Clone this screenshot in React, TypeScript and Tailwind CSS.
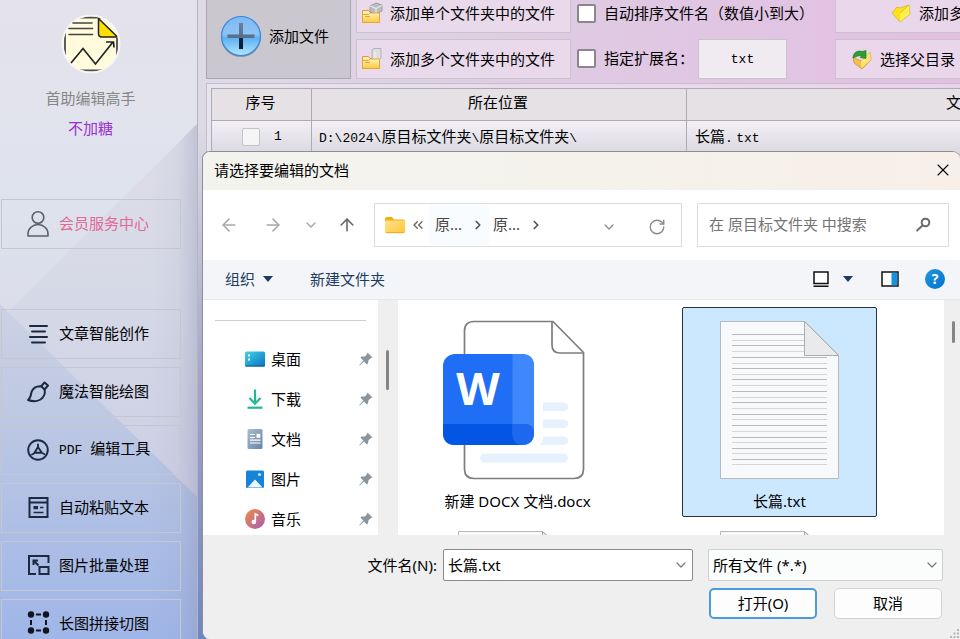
import React from 'react';
import { ArrowLeft, ArrowRight, ArrowUp, ChevronDown, ChevronRight, ChevronsLeft, RotateCw, X } from 'lucide-react';
import clsx from 'clsx';

type IconProps = { className?: string };

/* ---------- sidebar icons ---------- */

const LogoMark = () => (
  <svg viewBox="0 0 60 60" className="size-[60px]" aria-hidden="true">
    <defs>
      <clipPath id="logo-clip">
        <circle cx="30" cy="30" r="27.500" />
      </clipPath>
    </defs>
    <circle cx="30" cy="30" r="29.500" fill="#f6f5f8" />
    <g clipPath="url(#logo-clip)">
      <rect width="60" height="60" fill="#fffbdc" />
      <path d="M4 0v60M56 24v36M0 3.500h40M0 56.500h60" stroke="#4c4c4c" strokeWidth="1.800" fill="none" />
      <path d="M39 0h21v22z" fill="#f3f2f6" />
      <path d="M37.500 4.500l19 18.500H41q-3.500 0-3.500-3.500z" fill="#ffe000" stroke="#222" strokeWidth="1.500" strokeLinejoin="round" />
    </g>
    <path d="M12 9h19M8 14.500h23.500M8 20.500h23.500" stroke="#444" strokeWidth="1.600" strokeLinecap="round" />
    <path d="M10 49l12-14.500L34.500 50 52 28M45 28h7.500l.5 5.500" fill="none" stroke="#222" strokeWidth="1.700" />
  </svg>
);

const UserIcon = ({ className }: IconProps) => (
  <svg viewBox="0 0 24 28" className={className} fill="none" stroke="#5b5f6b" strokeWidth="1.600">
    <circle cx="12" cy="8.500" r="5.800" />
    <path d="M2 27v-2a10 9.500 0 0 1 20 0v2z" strokeLinejoin="round" />
  </svg>
);

const LinesIcon = ({ className }: IconProps) => (
  <svg viewBox="0 0 24 24" className={className} stroke="#1b2a40" strokeWidth="2" strokeLinecap="round">
    <path d="M4 5h17M6 10.500h13M4 16h17M6 21.500h13" />
  </svg>
);

const BrushIcon = ({ className }: IconProps) => (
  <svg viewBox="0 0 24 24" className={className} fill="none" stroke="#1b2a40" strokeWidth="2" strokeLinejoin="round">
    <path d="M2 21c2.500-2 3-4.500 3.500-8C7 9 10 7.200 14 7.200l1.500.300 3 3c1 4-.5 7.500-4 10-3.500 2.200-8 2-12.500.500z" />
    <path d="M15 7.500l3.500-4 3.500 3-3.500 4" />
  </svg>
);

const PdfIcon = ({ className }: IconProps) => (
  <svg viewBox="0 0 24 24" className={className} fill="none" stroke="#1b2a40" strokeWidth="1.900">
    <circle cx="12" cy="13" r="9.800" />
    <path d="M12 7.500v2.500L8 16.500l-2 1M12 10l4 6 2.200 1M8.500 15.700h7" strokeLinecap="round" strokeLinejoin="round" />
  </svg>
);

const FormIcon = ({ className }: IconProps) => (
  <svg viewBox="0 0 24 24" className={className} fill="none" stroke="#1b2a40" strokeWidth="2">
    <path d="M3.500 3h18v19h-18zM3.500 7.500h18" />
    <path d="M14 12.500h3.500M7.500 17.500h10" strokeWidth="1.700" />
    <path d="M7.500 11H12v3.200H7.500z" fill="#1b2a40" stroke="none" />
  </svg>
);

const ShrinkIcon = ({ className }: IconProps) => (
  <svg viewBox="0 0 24 24" className={className} fill="none" stroke="#1b2a40" strokeWidth="2">
    <path d="M22.500 10V3H3v18h7M13.500 14h9v7h-9z" />
    <path d="M7.500 12V7.500H12M8 8l4.500 4.500" />
  </svg>
);

const NodesIcon = ({ className }: IconProps) => (
  <svg viewBox="0 0 24 24" className={className} stroke="#10141f" strokeWidth="2">
    <path d="M10 3.500h5M10 19.500h5M5 9v5M20 9v5" />
    <g fill="#10141f" stroke="none">
      <circle cx="5" cy="3.500" r="3.200" />
      <circle cx="20" cy="3.500" r="3.200" />
      <circle cx="5" cy="19.500" r="3.200" />
      <circle cx="20" cy="19.500" r="3.200" />
    </g>
  </svg>
);

/* ---------- toolbar icons ---------- */

const PlusOrb = () => (
  <svg viewBox="0 0 42 42" className="size-[42px] shrink-0" aria-hidden="true">
    <defs>
      <linearGradient id="orb" x1="0" y1="0" x2="0" y2="1">
        <stop offset="0" stopColor="#7db9f2" />
        <stop offset=".45" stopColor="#8cc4f5" />
        <stop offset=".55" stopColor="#5cb0f2" />
        <stop offset="1" stopColor="#b5e6ff" />
      </linearGradient>
      <linearGradient id="orb-bar" x1="0" y1="0" x2="0" y2="1">
        <stop offset="0" stopColor="#66829f" />
        <stop offset=".5" stopColor="#5a6f8b" />
        <stop offset=".6" stopColor="#0a2240" />
        <stop offset="1" stopColor="#0a1d38" />
      </linearGradient>
    </defs>
    <circle cx="21" cy="22" r="20" fill="#8b93a5" />
    <circle cx="21" cy="21" r="19.500" fill="url(#orb)" stroke="#3d86dc" strokeWidth="1.200" />
    <path d="M19 8h4v26h-4z" fill="url(#orb-bar)" />
    <path d="M7.500 19.500h27v3.500h-27z" fill="#5a6f8b" />
  </svg>
);

const FolderStack = ({ tall }: { tall?: boolean }) => (
  <svg viewBox="0 0 22 22" className="size-[22px] shrink-0" aria-hidden="true">
    <defs>
      <linearGradient id="stack" x1="0" y1="0" x2="0" y2="1">
        <stop offset="0" stopColor="#fff3b8" />
        <stop offset="1" stopColor="#ffc83d" />
      </linearGradient>
    </defs>
    <path d="M1.500 20.500V8.500h6l1.500 2h9v10z" fill="#ffe9b0" stroke="#e29a3c" />
    {tall ? (
      <path d="M11 2l2-1.500h7V10l-2 2h-7z" fill="#dedee0" stroke="#a5a5a8" strokeWidth=".8" />
    ) : (
      <path d="M9 4l6-3 6 2v6l-6 3-6-2z" fill="#bdbdc0" stroke="#929296" strokeWidth=".8" />
    )}
    <path d={tall ? 'M14 3v8' : 'M9 4l6 2.500 6-3M15 6.500V11'} stroke="#f4f4f4" fill="none" />
    <path d="M1.500 20.500v-8h6l1.500-1.500h9.500v9.500z" fill="url(#stack)" stroke="#e8a33d" />
    <path d="M4 14.500h5" stroke="#e8a33d" />
  </svg>
);

const YellowFolder = ({ arrow }: { arrow?: boolean }) => (
  <svg viewBox="0 0 20 20" className="size-5 shrink-0" aria-hidden="true">
    {arrow ? (
      <>
        <path d="M1 8l8 4 9-9 1 8-9 9-8-6z" fill="#f2c04a" stroke="#b98e1c" strokeWidth=".6" />
        <path d="M9 12l9-9 .8 8L9.500 19z" fill="#ffe27a" />
        <path d="M1 9C1 4 5 1 10 2.500l4-1v8L8 8.500l2-1.500C6 6 4 8 1 9z" fill="#2f9e2f" stroke="#1b7320" strokeWidth=".6" />
      </>
    ) : (
      <>
        <path d="M1 10l5-6 3 1 9-3 1 9-10 8z" fill="#ffe11a" stroke="#c9a227" strokeWidth=".6" />
        <path d="M9 10.500l9-8 .5 8.500L9 18.500z" fill="#fff050" />
        <path d="M9 10l9-8" stroke="#e0b81d" strokeWidth=".8" />
      </>
    )}
  </svg>
);

/* ---------- file dialog icons ---------- */

const FolderIcon = () => (
  <svg viewBox="0 0 22 18" className="h-[18px] w-[22px] shrink-0" aria-hidden="true">
    <defs>
      <linearGradient id="folder" x1="0" y1="0" x2="1" y2="1">
        <stop offset="0" stopColor="#ffe390" />
        <stop offset="1" stopColor="#ffc736" />
      </linearGradient>
    </defs>
    <path d="M1 3q0-2 2-2h5l2 2.500h9q2 0 2 2V9H1z" fill="#f4ae0c" />
    <rect x="1" y="4.500" width="20" height="12.500" rx="1.500" fill="url(#folder)" />
    <path d="M2 16.700h18" stroke="#e9a21b" strokeWidth=".9" />
  </svg>
);

const DesktopIcon = () => (
  <svg viewBox="0 0 20 20" className="size-5">
    <defs>
      <linearGradient id="desk" x1="0" y1="0" x2="1" y2="1">
        <stop offset="0" stopColor="#3fd3e6" />
        <stop offset="1" stopColor="#0b72c4" />
      </linearGradient>
    </defs>
    <rect y="2.500" width="20" height="15" rx="1.500" fill="url(#desk)" />
    <path d="M0 16.500h20q0 1-1 1H1q-1 0-1-1z" fill="#0b5594" />
    <path d="M3 5.500h2v2H3zM3 9.500h2v2H3z" fill="#fff" />
  </svg>
);

const DownloadIcon = () => (
  <svg viewBox="0 0 20 20" className="size-5" fill="none" stroke="#22b893" strokeWidth="2.200">
    <path d="M10 .500V14M4.500 9L10 14.700 15.500 9" />
    <path d="M2.500 18.700h15" />
  </svg>
);

const DocumentIcon = () => (
  <svg viewBox="0 0 20 20" className="size-5">
    <defs>
      <linearGradient id="doc" x1="0" y1="0" x2="1" y2="1">
        <stop offset="0" stopColor="#a9bdd2" />
        <stop offset="1" stopColor="#6784a5" />
      </linearGradient>
    </defs>
    <rect x="2.500" width="15" height="20" rx="1.500" fill="url(#doc)" />
    <path d="M5 5.500h5M5 8.500h5M5 11.200h10.500M5 14h10.500" stroke="#fff" strokeWidth="1.200" />
    <path d="M11.500 4.800h3.800v4h-3.800z" fill="#fff" />
  </svg>
);

const PictureIcon = () => (
  <svg viewBox="0 0 20 20" className="size-5">
    <rect x="1" y="1.500" width="18" height="17.500" rx="1.500" fill="#1583d8" />
    <path d="M2.500 18.500l7.500-8 7.500 8z" fill="#eef7ff" />
    <circle cx="14.500" cy="5.500" r="1.600" fill="#bfe3fb" />
  </svg>
);

const MusicIcon = () => (
  <svg viewBox="0 0 20 20" className="size-5">
    <defs>
      <linearGradient id="music" x1="0" y1="0" x2="1" y2="1">
        <stop offset="0" stopColor="#f58b45" />
        <stop offset="1" stopColor="#a65bb4" />
      </linearGradient>
    </defs>
    <circle cx="10" cy="10" r="10" fill="url(#music)" />
    <circle cx="8.800" cy="13" r="2.300" fill="#fff" />
    <path d="M10.300 13V5l3 1.500" stroke="#fff" strokeWidth="1.700" fill="none" />
  </svg>
);

const PinIcon = () => (
  <svg viewBox="0 0 14 14" className="size-3.5 shrink-0" fill="#8b959e">
    <path d="M8.500.500l5 5-1.500.500-2.500 2.200-.5 3.300-1.200 1L5 9.500.800 13.500l-.5-.5L4.300 8.500 1.500 5.700l1-1.200L6 4.500 8 2z" />
  </svg>
);

const SearchIcon = () => (
  <svg viewBox="0 0 16 16" className="size-4 shrink-0" fill="none" stroke="#6a6a6a" strokeWidth="2">
    <circle cx="10.500" cy="5.500" r="3.800" />
    <path d="M7.500 8.500L1.500 14" />
  </svg>
);

const Triangle = () => (
  <svg viewBox="0 0 10 6" className="h-1.5 w-2.5" fill="#1e3c63">
    <path d="M0 0h10L5 6z" />
  </svg>
);

/* the badge hangs over the left edge, so the drawing keeps spare room on the right */
const DocxThumb = () => (
  <svg viewBox="0 0 149 160" className="h-40 w-[149px]" aria-hidden="true">
    <path d="M31 1.500h79l30.500 31V149q0 9.500-9.500 9.500H31q-9.500 0-9.500-9.500V11q0-9.500 9.500-9.500z" fill="#fff" stroke="#7d7d7d" strokeWidth="1.700" />
    <path d="M109 2v23q0 8 8 8h23.500" fill="none" stroke="#7d7d7d" strokeWidth="1.700" />
    <path d="M100 82.500h21a4.250 4.250 0 0 1 0 8.500h-21zM100 99.500h21a4.250 4.250 0 0 1 0 8.500h-21zM100 116.500h21a4.250 4.250 0 0 1 0 8.500H97q3-3 3-8.500z" fill="#e7f0fe" />
    <rect x="37" y="133.500" width="88" height="9" rx="4.500" fill="#e7f0fe" />
    <rect y="34" width="91" height="91" rx="12" fill="#1f6ef5" />
    <path d="M69.500 34H79q12 0 12 12v67q0-9-9-9H69.500z" fill="#3f87fd" />
    <path d="M0 104h69.500v9q0 12 10 12H12q-12 0-12-12z" fill="#0356e4" />
    <path d="M69.500 104H79q12 0 12 9 0 12-12 12-9.500-1-9.500-12z" fill="#1c68ee" />
    <text x="35" y="85" textAnchor="middle" fill="#fff" fontFamily="'Open Sans', sans-serif" fontWeight="700" fontSize="45">W</text>
  </svg>
);

const ruleYs = [14, 20, 25, 31, 37, 43, 48, 54, 59, 65, 71, 77, 82, 88, 94, 99, 105, 111, 117, 122, 128, 133, 139, 144];

const TxtThumb = () => (
  <svg viewBox="0 0 119 160" className="h-40 w-[119px]" aria-hidden="true">
    <path d="M.500 1.500H85l33.500 33.500v123.500H.500z" fill="#f8f9fa" stroke="#b3b9bd" />
    {ruleYs.map((y, i) => (
      <path key={y} d={`M12 ${y + 0.5}H${y < 35 ? 84 : 107}`} stroke={i % 2 ? '#d5d6d8' : '#b9babd'} />
    ))}
    <path d="M84.500 1.500v34h34z" fill="#e9eaec" stroke="#a9adb1" />
  </svg>
);

/* ---------- data ---------- */

const menuItems = [
  { label: '文章智能创作', Icon: LinesIcon },
  { label: '魔法智能绘图', Icon: BrushIcon },
  { label: '编辑工具', latin: 'PDF', Icon: PdfIcon },
  { label: '自动粘贴文本', Icon: FormIcon },
  { label: '图片批量处理', Icon: ShrinkIcon },
  { label: '长图拼接切图', Icon: NodesIcon },
];

const quickAccess = [
  { label: '桌面', Icon: DesktopIcon },
  { label: '下载', Icon: DownloadIcon },
  { label: '文档', Icon: DocumentIcon },
  { label: '图片', Icon: PictureIcon },
  { label: '音乐', Icon: MusicIcon },
];

const Mono: React.FC<{ children: React.ReactNode }> = ({ children }) => (
  <span className="font-['Liberation_Mono',monospace] text-[13px] whitespace-pre">{children}</span>
);

/* ---------- sections ---------- */

const menuButton = 'flex h-[50px] w-full items-center border border-[#c6c7ce] pb-0.5 pl-6 text-[15px]';

const Sidebar = () => (
  <aside className="relative isolate w-[198px] shrink-0 overflow-hidden border-r border-[#b4b5be]">
    {/* faceted backdrop */}
    <svg viewBox="0 0 198 639" preserveAspectRatio="none" className="absolute inset-0 -z-10 size-full" aria-hidden="true">
      <defs>
        <linearGradient id="side-base" x1="0" y1="0" x2="0" y2="1">
          <stop offset="0" stopColor="#e4e2eb" />
          <stop offset=".3" stopColor="#dfe3ee" />
          <stop offset=".5" stopColor="#dadde9" />
        </linearGradient>
        <linearGradient id="side-facet" x1="0" y1="0" x2="0" y2="1">
          <stop offset="0" stopColor="#dedee9" />
          <stop offset=".5" stopColor="#d5d8e6" />
          <stop offset="1" stopColor="#cccee5" />
        </linearGradient>
        <linearGradient id="side-low" x1="0" y1="0" x2="0" y2="1">
          <stop offset="0" stopColor="#ccd2e4" />
          <stop offset=".4" stopColor="#bac6e3" />
          <stop offset="1" stopColor="#9fb6e8" />
        </linearGradient>
        <linearGradient id="side-edge">
          <stop offset="0" stopColor="#8288a8" stopOpacity="0" />
          <stop offset=".6" stopColor="#8288a8" stopOpacity=".08" />
          <stop offset="1" stopColor="#8288a8" stopOpacity=".3" />
        </linearGradient>
      </defs>
      <rect width="198" height="639" fill="url(#side-base)" />
      <path d="M198 124L8 312l190 188z" fill="url(#side-facet)" />
      <path d="M0 304l198 193v142H0z" fill="url(#side-low)" />
      <path d="M198 124l-48 48v467h48z" fill="url(#side-edge)" />
    </svg>

    <div className="flex w-[181px] flex-col items-center pt-3.5">
      <LogoMark />
      <h1 className="mt-3 text-[15px] leading-6 text-[#868686]">首助编辑高手</h1>
      <p className="mt-1.5 text-[15px] leading-6 text-[#9a2fd0]">不加糖</p>
    </div>

    <nav className="mt-[59px] w-[181px] pl-px">
      <button type="button" className={clsx(menuButton, 'text-[#e06a94]')}>
        <UserIcon className="h-7 w-6" />
        <span className="ml-[9px]">会员服务中心</span>
      </button>
      <div className="mt-[60px] flex flex-col gap-2">
        {menuItems.map(({ label, latin, Icon }) => (
          <button key={label} type="button" className={clsx(menuButton, 'text-black')}>
            <Icon className="size-6 shrink-0" />
            <span className="ml-[9px]">
              {latin && <Mono>{latin + ' '}</Mono>}
              {label}
            </span>
          </button>
        ))}
      </div>
    </nav>
  </aside>
);

const toolButton = 'flex h-10 items-center border border-[#c9c3ca] bg-[#ecdeee]/75';
const tickBox = 'size-[19px] appearance-none rounded-xs border-2 border-[#8a878c] bg-white';

const Toolbar = () => (
  <div className="-mt-[7px] flex gap-[5px] pl-2">
    <button type="button" className="flex w-[145px] shrink-0 items-center gap-[7px] border border-[#a8a6ac] bg-[#cac7ce] pl-[13px]">
      <PlusOrb />
      <span>添加文件</span>
    </button>
    <div className="flex w-[215px] shrink-0 flex-col gap-1.5">
      <button type="button" className={clsx(toolButton, 'gap-[7px] pl-1')}>
        <FolderStack />
        <span>添加单个文件夹中的文件</span>
      </button>
      <button type="button" className={clsx(toolButton, 'gap-[7px] pl-1')}>
        <FolderStack tall />
        <span>添加多个文件夹中的文件</span>
      </button>
    </div>
    <div className="flex w-[254px] shrink-0 flex-col gap-1.5 pl-px">
      <label className="flex h-10 items-center gap-2">
        <input type="checkbox" className={tickBox} />
        <span>自动排序文件名（数值小到大）</span>
      </label>
      <div className="flex h-10 items-center">
        <label className="flex items-center gap-2 pb-0.5">
          <input type="checkbox" className={tickBox} />
          <span>指定扩展名：</span>
        </label>
        <input
          type="text"
          defaultValue="txt"
          aria-label="扩展名"
          className="ml-1 h-10 w-[89px] border border-[#c9c3ca] bg-[#f0eaf1] text-center font-['Liberation_Mono',monospace] text-[13px]"
        />
      </div>
    </div>
    <div className="flex w-60 shrink-0 flex-col gap-1.5">
      <button type="button" className={clsx(toolButton, 'gap-2 pl-[55px]')}>
        <YellowFolder />
        <span>添加多</span>
      </button>
      <button type="button" className={clsx(toolButton, 'gap-2 pl-4')}>
        <YellowFolder arrow />
        <span>选择父目录</span>
      </button>
    </div>
  </div>
);

const FileTable = () => (
  <div className="mt-1 ml-2 grow border-t border-l border-[#c2bfc8] bg-white/30 pt-1 pl-1">
    <table className="w-[1040px] table-fixed border-collapse border border-[#adabb0]">
      <colgroup>
        <col className="w-[100px]" />
        <col className="w-[375px]" />
        <col />
      </colgroup>
      <thead className="bg-[#e5e1e5]">
        <tr className="h-8">
          <th className="border border-[#adabb0] pr-0.5 pb-1 font-normal">序号</th>
          <th className="border border-[#adabb0] pr-0.5 pb-1 font-normal">所在位置</th>
          <th className="border border-[#adabb0] pb-1 font-normal">文件名</th>
        </tr>
      </thead>
      <tbody>
        <tr className="h-[34px] bg-linear-to-b from-[#f2f0f6] to-[#d9d8de]">
          <td className="border border-[#adabb0] pb-0.5 pl-[30px]">
            <label className="flex items-center gap-3.5">
              <input type="checkbox" className="size-[18px] appearance-none rounded-xs border border-[#c4c4c6] bg-[#f5f5f6]" />
              <Mono>1</Mono>
            </label>
          </td>
          <td className="border border-[#adabb0] pb-0.5 pl-[7px]">
            <Mono>D:\2024\</Mono>原目标文件夹<Mono>\</Mono>原目标文件夹<Mono>\</Mono>
          </td>
          <td className="border border-[#adabb0] pb-0.5 pl-2">
            长篇<Mono>.</Mono> <Mono>txt</Mono>
          </td>
        </tr>
      </tbody>
    </table>
  </div>
);

const FileTile: React.FC<{ label?: string; selected?: boolean; children: React.ReactNode }> = ({ label, selected, children }) => (
  <button
    type="button"
    className={clsx(
      'flex h-[210px] w-[195px] shrink-0 flex-col items-center rounded-xs border pt-3',
      selected ? 'border-[#26313b] bg-[#cce8ff]' : 'border-transparent',
    )}
  >
    {children}
    {label && <span className="mt-[9px] leading-6">{label}</span>}
  </button>
);

const OpenDialog = () => (
  <section
    role="dialog"
    aria-label="请选择要编辑的文档"
    className="absolute top-[151px] right-0 bottom-0 left-1 flex flex-col overflow-hidden rounded-t-lg rounded-bl-lg border-t border-l border-[#8d8d94] bg-white font-['Noto_Sans','Noto_Sans_CJK_SC',sans-serif] text-[15px] text-black"
  >
    <header className="flex h-[38px] shrink-0 items-center justify-between bg-linear-to-r from-[#f3f3ee] via-[#f4f2eb] to-[#f8efe9] pr-[7px] pb-0.5 pl-[11px]">
      <h2>请选择要编辑的文档</h2>
      <button type="button" aria-label="关闭"><X className="size-5" strokeWidth={1.3} /></button>
    </header>

    <div className="flex h-[70px] shrink-0 items-center pr-[11px] pb-px pl-1">
      <button type="button" aria-label="后退" className="flex w-11 justify-center text-[#a9a9a9]"><ArrowLeft className="size-5" strokeWidth={1.9} /></button>
      <button type="button" aria-label="前进" className="flex w-11 justify-center text-[#a9a9a9]"><ArrowRight className="size-5" strokeWidth={1.9} /></button>
      <button type="button" aria-label="最近" className="flex w-8 justify-center text-[#a9a9a9]"><ChevronDown className="size-4" strokeWidth={2.2} /></button>
      <button type="button" aria-label="上移" className="flex w-10 justify-center text-[#666]"><ArrowUp className="size-5" strokeWidth={1.9} /></button>

      <div className="ml-[7px] flex h-11 flex-1 items-center border border-[#dcdde0] pl-[9px] text-[#444]">
        <FolderIcon />
        <ChevronsLeft className="ml-1 size-4 text-[#666]" />
        <div className="ml-[3px] flex h-10 items-center bg-[#f8fcff]">
          <button type="button" className="w-[42px] pl-1.5 text-left">原...</button>
          <ChevronRight className="mr-1 size-3.5 text-[#555]" strokeWidth={3} />
        </div>
        <button type="button" className="w-10 pl-1 text-left">原...</button>
        <ChevronRight className="size-3.5 text-[#555]" strokeWidth={3} />
        <div className="ml-auto flex items-center gap-[31px] pt-1 pr-[15px] text-[#8a8a8a]">
          <button type="button" aria-label="历史"><ChevronDown className="size-4" strokeWidth={1.8} /></button>
          <button type="button" aria-label="刷新"><RotateCw className="size-[18px]" strokeWidth={1.8} /></button>
        </div>
      </div>

      <label className="ml-[15px] flex h-11 w-[252px] items-center border border-[#dcdde0] pr-[17px] pl-[11px]">
        <input
          type="text"
          aria-label="搜索"
          placeholder="在 原目标文件夹 中搜索"
          className="min-w-0 flex-1 bg-transparent placeholder:text-[#737373]"
        />
        <SearchIcon />
      </label>
    </div>

    <div className="flex h-10 shrink-0 items-center border-b border-[#e7e8ea] bg-[#f4f5f8] pr-[15px] pb-px pl-[22px] text-[#1e3c63]">
      <button type="button" className="flex items-center gap-2">组织<Triangle /></button>
      <button type="button" className="ml-[37px]">新建文件夹</button>
      <div className="ml-auto flex items-center">
        <button type="button" aria-label="视图" className="flex items-center gap-3.5">
          <svg viewBox="0 0 16 16" className="size-4" fill="#fff" stroke="#111" strokeWidth="1.500">
            <path d="M1 1h14v11.500H1zM.500 15.200h15" />
          </svg>
          <Triangle />
        </button>
        <button type="button" aria-label="预览窗格" className="ml-7">
          <svg viewBox="0 0 18 16" className="h-4 w-[18px]">
            <path d="M1 1h16v14H1z" fill="#fff" stroke="#111" strokeWidth="1.500" />
            <path d="M10.500 1.800h5.800v12.400h-5.800z" fill="#1493e6" />
          </svg>
        </button>
        <button type="button" aria-label="帮助" className="ml-[26px] size-5 rounded-full bg-linear-to-br from-[#2196dd] to-[#0072d0] text-sm leading-5 font-bold text-white">?</button>
      </div>
    </div>

    <div className="flex min-h-0 flex-1 overflow-hidden">
      <div className="w-[175px] shrink-0 pt-5">
        <hr className="mr-3 ml-3 border-[#cfd1d1]" />
        <ul className="mt-[18px]">
          {quickAccess.map(({ label, Icon }) => (
            <li key={label} className="flex h-10 items-center pr-[5px] pl-[42px]">
              <Icon />
              <span className="ml-1.5 flex-1">{label}</span>
              <PinIcon />
            </li>
          ))}
        </ul>
      </div>
      <div className="w-5 shrink-0 bg-[#efefef] pt-[50px]">
        <div className="ml-2 h-10 w-[3px] rounded-full bg-[#858585]" />
      </div>
      <div className="grid min-w-0 flex-1 auto-rows-[210px] grid-cols-[195px_195px] content-start gap-x-[67px] overflow-hidden pt-[7px] pl-[22px]">
        <FileTile label="新建 DOCX 文档.docx"><DocxThumb /></FileTile>
        <FileTile label="长篇.txt" selected><TxtThumb /></FileTile>
        <FileTile><TxtThumb /></FileTile>
        <FileTile><TxtThumb /></FileTile>
      </div>
      <div className="w-4 shrink-0 bg-[#efefef] pt-[21px]">
        <div className="ml-2 h-[22px] w-[3px] rounded-full bg-[#858585]" />
      </div>
    </div>

    <footer className="relative h-[104px] shrink-0 bg-[#efefef] pt-3.5 pr-[17px]">
      <div className="flex items-center justify-end">
        <label htmlFor="file-name">文件名(N):</label>
        <div className="ml-1.5 flex h-8 w-[250px] items-center rounded-xs border border-[#8a8a8a] bg-white pr-[3px] pl-1">
          <input id="file-name" type="text" defaultValue="长篇.txt" className="min-w-0 flex-1 bg-transparent" />
          <button type="button" aria-label="展开"><ChevronDown className="size-4 text-[#777]" strokeWidth={1.8} /></button>
        </div>
        <div className="relative ml-[15px] w-[235px]">
          <select aria-label="文件类型" className="h-8 w-full appearance-none rounded-xs border border-[#cdd0d0] bg-[#fbfdfd] pl-1">
            <option>所有文件 (*.*)</option>
          </select>
          <ChevronDown className="pointer-events-none absolute top-2 right-[3px] size-4 text-[#777]" strokeWidth={1.8} />
        </div>
      </div>
      <div className="mt-[7px] flex justify-end gap-[17px] pr-px">
        <button type="button" className="h-[31px] w-[108px] rounded-[5px] border-2 border-[#4a9ade] bg-[#fdfdfd]">打开(O)</button>
        <button type="button" className="h-[31px] w-[108px] rounded-[5px] border border-[#d2d2d2] bg-[#fdfdfd]">取消</button>
      </div>
      <svg viewBox="0 0 10 10" className="absolute right-0 bottom-0 size-2.5" fill="#b5b5b5">
        <path d="M7 0h2v2H7zM3.500 3.500h2v2h-2zM7 3.500h2v2H7zM0 7h2v2H0zM3.500 7h2v2h-2zM7 7h2v2H7z" />
      </svg>
    </footer>
  </section>
);

export default function App() {
  return (
    <div className="flex h-screen overflow-hidden font-['Noto_Sans_CJK_SC',sans-serif] text-[15px] text-black">
      <Sidebar />
      <main className="relative flex min-w-0 flex-1 flex-col overflow-hidden bg-linear-to-b from-transparent from-20% via-[#a4a4c6] via-60% to-[#6d86c4]">
        <div className="absolute inset-x-0 top-0 -z-10 h-[400px] bg-linear-to-r from-[#dddae6] via-[#dfcbe3] via-45% to-[#e3bfe3]" />
        <Toolbar />
        <FileTable />
        <OpenDialog />
      </main>
    </div>
  );
}
